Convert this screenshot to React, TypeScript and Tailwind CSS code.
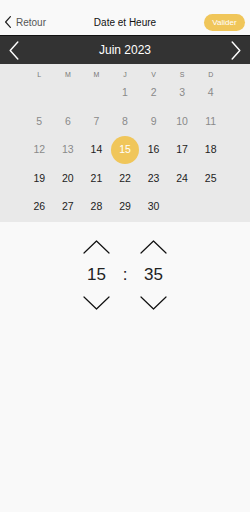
import React, { useState } from "react";

const days = ["L", "M", "M", "J", "V", "S", "D"];

function Chevron({ dir, className }: { dir: "left" | "right" | "up" | "down"; className?: string }) {
  // tracés fins façon iOS
  const pts: Record<string, string> = {
    left: "9,1 1,10 9,19",
    right: "1,1 9,10 1,19",
    up: "1,13 13.5,1 26,13",
    down: "1,1 13.5,13 26,1",
  };
  const vb = dir === "up" || dir === "down" ? "0 0 27 14" : "0 0 10 20";
  return (
    <svg viewBox={vb} className={className} fill="none" stroke="currentColor" strokeLinecap="round" strokeLinejoin="round">
      <polyline points={pts[dir]} />
    </svg>
  );
}

export default function App() {
  const [selected, setSelected] = useState(15);
  const [hour] = useState(15);
  const [minute] = useState(35);

  // juin 2023 commence un jeudi
  const cells: (number | null)[] = [null, null, null];
  for (let d = 1; d <= 30; d++) cells.push(d);
  while (cells.length < 35) cells.push(null);

  return (
    <div
      className="relative w-[250px] h-[512px] bg-[#f9f9f9] overflow-hidden"
      style={{ fontFamily: '"Liberation Sans", Arial, sans-serif' }}
    >
      {/* Barre du haut */}
      <div className="relative h-[35px] pt-[10px] pb-[1px] px-[5px] flex items-center justify-between">
        <button className="flex items-center gap-[5px] text-[#555] text-[10px]">
          <Chevron dir="left" className="w-[6px] h-[12px] text-[#222] stroke-[2]" />
          <span>Retour</span>
        </button>
        <span className="absolute left-0 right-0 top-0 pt-[10px] pb-[1px] h-[35px] flex items-center justify-center text-[10px] text-[#111] pointer-events-none">
          Date et Heure
        </span>
        <button className="w-[41px] h-[17px] rounded-full bg-[#f0c65a] text-white text-[8px] leading-[17px] text-center">
          Valider
        </button>
      </div>

      {/* Mois */}
      <div className="h-[29px] bg-[#333333] border-t border-[#111] flex items-center justify-between px-[9px]">
        <Chevron dir="left" className="w-[10px] h-[19px] text-white stroke-[1.5]" />
        <span className="text-white text-[12px]">Juin 2023</span>
        <Chevron dir="right" className="w-[10px] h-[19px] text-white stroke-[1.5]" />
      </div>

      {/* Calendrier */}
      <div className="bg-[#e9e9e9] h-[158px]">
        <div className="w-[200px] mx-auto grid grid-cols-7">
          {days.map((d, i) => (
            <div key={i} className="h-[15px] pt-[7px] text-center text-[7px] leading-[7px] text-[#777]">
              {d}
            </div>
          ))}
          {cells.map((d, i) => (
            <div key={i} className="h-[28.5px] flex items-center justify-center">
              {d !== null &&
                (d === selected ? (
                  <button
                    onClick={() => setSelected(d)}
                    className="w-[28px] h-[28px] rounded-full bg-[#f0c65a] text-white text-[10.5px]"
                  >
                    {d}
                  </button>
                ) : (
                  <button
                    onClick={() => setSelected(d)}
                    className={`text-[10.5px] ${d < 14 ? "text-[#8a8a8a]" : "text-[#222]"}`}
                  >
                    {d}
                  </button>
                ))}
            </div>
          ))}
        </div>
      </div>

      {/* Heure */}
      <div className="w-[200px] mx-auto grid grid-cols-7 pt-[18px]">
        <div className="col-start-3 flex flex-col items-center">
          <Chevron dir="up" className="w-[27px] h-[14px] text-[#111] stroke-[1.2]" />
          <span className="h-[42px] flex items-center text-[17px] text-[#222]">{hour}</span>
          <Chevron dir="down" className="w-[27px] h-[14px] text-[#111] stroke-[1.2]" />
        </div>
        <div className="flex flex-col items-center">
          <span className="mt-[14px] h-[42px] flex items-center text-[17px] text-[#222]">:</span>
        </div>
        <div className="flex flex-col items-center">
          <Chevron dir="up" className="w-[27px] h-[14px] text-[#111] stroke-[1.2]" />
          <span className="h-[42px] flex items-center text-[17px] text-[#222]">{minute}</span>
          <Chevron dir="down" className="w-[27px] h-[14px] text-[#111] stroke-[1.2]" />
        </div>
      </div>
    </div>
  );
}
